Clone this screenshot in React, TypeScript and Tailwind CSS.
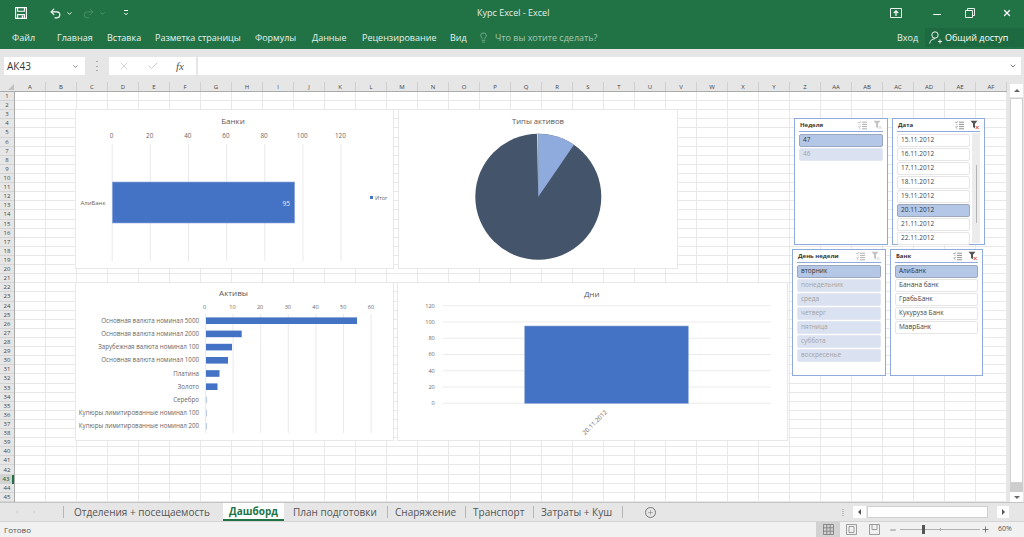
import { Undo2, Redo2, X, Check, ChevronDown, Lightbulb, Plus, Minus } from 'lucide-react'

const font = { fontFamily: '"Open Sans", sans-serif' }

/* -------------------- Data -------------------- */

const menu = [
  { label: 'Файл', w: 'w-[45px]' },
  { label: 'Главная', w: 'w-[50px]' },
  { label: 'Вставка', w: 'w-[48px]' },
  { label: 'Разметка страницы', w: 'w-[100px]' },
  { label: 'Формулы', w: 'w-[57px]' },
  { label: 'Данные', w: 'w-[50px]' },
  { label: 'Рецензирование', w: 'w-[88px]' },
  { label: 'Вид', w: 'w-[33px]' },
]

const columns = 'A B C D E F G H I J K L M N O P Q R S T U V W X Y Z AA AB AC AD AE AF'.split(' ')
const rows = Array.from({ length: 45 }, (_, i) => i + 1)
const cells = Array.from({ length: 45 * 32 }, (_, i) => i)

const assets = [
  { label: 'Основная валюта номинал 5000', end: 357 },
  { label: 'Основная валюта номинал 2000', end: 241.7 },
  { label: 'Зарубежная валюта номинал 100', end: 232 },
  { label: 'Основная валюта номинал 1000', end: 228 },
  { label: 'Платина', end: 219.5 },
  { label: 'Золото', end: 217.5 },
  { label: 'Серебро', end: 206.6 },
  { label: 'Купюры лимитированные номинал 100', end: 206.6 },
  { label: 'Купюры лимитированные номинал 200', end: 206.6 },
]

type SlicerItem = { label: string; state: 'sel' | 'dim' | 'on' }

const days: SlicerItem[] = [
  { label: 'вторник', state: 'sel' },
  { label: 'понедельник', state: 'dim' },
  { label: 'среда', state: 'dim' },
  { label: 'четверг', state: 'dim' },
  { label: 'пятница', state: 'dim' },
  { label: 'суббота', state: 'dim' },
  { label: 'воскресенье', state: 'dim' },
]

const banks: SlicerItem[] = [
  { label: 'АлиБанк', state: 'sel' },
  { label: 'Банана банк', state: 'on' },
  { label: 'ГрабьБанк', state: 'on' },
  { label: 'Кукуруза Банк', state: 'on' },
  { label: 'МаврБанк', state: 'on' },
]

const dates: SlicerItem[] = [
  { label: '15.11.2012', state: 'on' },
  { label: '16.11.2012', state: 'on' },
  { label: '17.11.2012', state: 'on' },
  { label: '18.11.2012', state: 'on' },
  { label: '19.11.2012', state: 'on' },
  { label: '20.11.2012', state: 'sel' },
  { label: '21.11.2012', state: 'on' },
  { label: '22.11.2012', state: 'on' },
]

const weeks: SlicerItem[] = [
  { label: '47', state: 'sel' },
  { label: '46', state: 'dim' },
]

/* -------------------- Small icons -------------------- */

function SaveIcon() {
  return (
    <svg width="12" height="12" viewBox="0 0 12 12" fill="none" stroke="#fff" strokeWidth="1.1">
      <path d="M.6.6h10.8v10.8H.6z" />
      <path d="M2.6.6v3.6h6.8V.6M2.6 11.4V7.6h6.8v3.8" />
      <path d="M6.8 8.6h1.4v2.6H6.8z" fill="#fff" stroke="none" />
    </svg>
  )
}

function MultiSelectIcon({ dim }: { dim?: boolean }) {
  return (
    <svg width="9" height="9" viewBox="0 0 9 9" fill="none" stroke={dim ? '#9a9a9a' : '#777'} strokeWidth="0.8">
      <path d="M4 1.2h5M4 3.4h5M4 5.6h5M4 7.8h5" />
      <path d="M.5 1.2l.8.8L2.8.4M.5 5.6l.8.8 1.5-1.6" />
      <path d="M1.5 3.4h.8M1.5 7.8h.8" />
    </svg>
  )
}

function ClearFilterIcon({ active }: { active?: boolean }) {
  return (
    <svg width="10" height="10" viewBox="0 0 10 10" fill="none">
      <path d="M.5.8h7L5 3.8v4.4L3 7V3.8z" fill={active ? '#555' : '#c4c4c4'} />
      <path d="M5.6 6l3 3M8.6 6l-3 3" stroke={active ? '#d9483b' : '#d8d8d8'} strokeWidth="1" />
    </svg>
  )
}

function GridViewIcon() {
  return (
    <svg width="11" height="11" viewBox="0 0 11 11" fill="none" stroke="#777" strokeWidth="0.8">
      <path d="M.5.5h10v10H.5zM.5 3.8h10M.5 7.2h10M3.8.5v10M7.2.5v10" />
    </svg>
  )
}

function PageViewIcon() {
  return (
    <svg width="11" height="11" viewBox="0 0 11 11" fill="none" stroke="#888" strokeWidth="0.8">
      <path d="M.5.5h10v10H.5zM3 2.5h5v6H3z" />
    </svg>
  )
}

function BreakViewIcon() {
  return (
    <svg width="11" height="11" viewBox="0 0 11 11" fill="none" stroke="#888" strokeWidth="0.8">
      <path d="M.5.5h10v10H.5zM3 .5v5h5v-5" />
    </svg>
  )
}

/* -------------------- Slicer -------------------- */

function Slicer({ title, items, active, scroll, className }: { title: string; items: SlicerItem[]; active?: boolean; scroll?: boolean; className: string }) {
  return (
    <div className={`absolute border border-[#8faadc] bg-white px-[4px] ${className}`}>
      <div className="flex h-[13px] items-center justify-between border-b border-[#8faadc] pl-[1px]">
        <span className="text-[6px] font-bold text-[#333]">{title}</span>
        <div className="flex items-center gap-[6px]">
          <MultiSelectIcon dim={!active} />
          <ClearFilterIcon active={active} />
        </div>
      </div>
      <div className="mt-[1px] flex gap-[2px]">
        <div className="mt-[1px] flex flex-1 flex-col gap-[1.5px]">
          {items.map((it) => (
            <div
              key={it.label}
              className={
                it.state === 'sel'
                  ? 'flex h-[12.5px] items-center rounded-[2px] border border-[#9aa7bd] bg-[#b4c7e7] pl-[3px] text-[6.5px] text-[#333]'
                  : it.state === 'dim'
                    ? 'flex h-[12.5px] items-center rounded-[2px] border border-[#e2e7f3] bg-[#dae1f0] pl-[3px] text-[6.5px] text-[#a3a3a3]'
                    : 'flex h-[12.5px] items-center rounded-[2px] border border-[#e6e6e6] bg-white pl-[3px] text-[6.5px] text-[#444]'
              }
            >
              {it.label}
            </div>
          ))}
        </div>
        {scroll && (
          <div className="flex h-[110px] w-[8px] justify-center bg-[#ececec] pt-[32px]">
            <div className="h-[58px] w-[1px] bg-[#b5b5b5]" />
          </div>
        )}
      </div>
    </div>
  )
}

/* -------------------- Charts -------------------- */

function BanksChart() {
  const ticks = [0, 20, 40, 60, 80, 100, 120]
  return (
    <svg viewBox="76 110 317 158" className="h-full w-full" style={font}>
      <text x="233" y="124" fontSize="8" textAnchor="middle" fill="#595959">Банки</text>
      {ticks.map((t, i) => (
        <g key={t}>
          <line x1={112.2 + i * 38.15} x2={112.2 + i * 38.15} y1="144" y2="261" stroke="#e4e4e4" strokeWidth="0.8" />
          <text x={111.5 + i * 38.15} y="138" fontSize="6.3" textAnchor="middle" fill="#666">{t}</text>
        </g>
      ))}
      <rect x="112.3" y="182" width="182.4" height="41" fill="#4472c4" stroke="#8faadc" strokeWidth="0.6" />
      <text x="105.5" y="205" fontSize="6" textAnchor="end" fill="#666">АлиБанк</text>
      <text x="290" y="206" fontSize="6.5" textAnchor="end" fill="#e8edf7">95</text>
      <rect x="370" y="196" width="3" height="3" fill="#4472c4" />
      <text x="375" y="199.5" fontSize="5.5" fill="#666">Итог</text>
    </svg>
  )
}

function PieChart() {
  return (
    <svg viewBox="399 110 278 158" className="h-full w-full" style={font}>
      <text x="538" y="124" fontSize="7.7" textAnchor="middle" fill="#595959">Типы активов</text>
      <circle cx="538.3" cy="196.7" r="63" fill="#44546a" />
      <path d="M538.3 196.7V133.7A63 63 0 0 1 574 144.8Z" fill="#8faadc" />
      <path d="M538.3 196.7V133.7L536.9 133.7Z" fill="#c9d3e4" />
    </svg>
  )
}

function AssetsChart() {
  const ticks = [0, 10, 20, 30, 40, 50, 60]
  return (
    <svg viewBox="76 283 317 157" className="h-full w-full" style={font}>
      <text x="233.5" y="296" fontSize="8" textAnchor="middle" fill="#595959">Активы</text>
      {ticks.map((t, i) => (
        <g key={t}>
          <line x1={205.5 + i * 27.6} x2={205.5 + i * 27.6} y1="314" y2="433" stroke="#e4e4e4" strokeWidth="0.8" />
          <text x={204.7 + i * 27.7} y="309" fontSize="5.5" textAnchor="middle" fill="#666">{t}</text>
        </g>
      ))}
      {assets.map((a, i) => (
        <g key={a.label}>
          <text x="199" y={322.8 + i * 13.2} fontSize="6.2" textAnchor="end" fill="#666">{a.label}</text>
          <rect x="206" y={317.4 + i * 13.2} width={a.end - 206} height="6.6" fill={a.end < 207 ? '#8faadc' : '#4472c4'} />
        </g>
      ))}
    </svg>
  )
}

function DaysChart() {
  const ticks = [120, 100, 80, 60, 40, 20, 0]
  return (
    <svg viewBox="398 283 389 157" className="h-full w-full" style={font}>
      <text x="591.7" y="296.5" fontSize="8" textAnchor="middle" fill="#595959">Дни</text>
      {ticks.map((t, i) => (
        <g key={t}>
          <line x1="442.7" x2="770.7" y1={305.7 + i * 16.27} y2={305.7 + i * 16.27} stroke="#e6e6e6" strokeWidth="0.8" />
          <text x="434.7" y={307.6 + i * 16.27} fontSize="5.5" textAnchor="end" fill="#666">{t}</text>
        </g>
      ))}
      <rect x="524.7" y="326" width="163.6" height="77.4" fill="#4472c4" stroke="#8faadc" strokeWidth="0.6" />
      <text x="595" y="424.5" fontSize="6.2" textAnchor="middle" fill="#666" transform="rotate(-45 595 422.7)">20.11.2012</text>
    </svg>
  )
}

/* -------------------- App -------------------- */

export default function App() {
  return (
    <div className="flex h-[537px] w-[1024px] flex-col overflow-hidden bg-[#e6e6e6]" style={font}>
      {/* ---------------- Title bar ---------------- */}
      <div className="h-[49px] shrink-0 bg-[#217346] text-white">
        <div className="flex h-[26px] items-center">
          <div className="ml-[15px]"><SaveIcon /></div>
          <Undo2 size={13} strokeWidth={2} className="ml-[22px]" />
          <ChevronDown size={7} strokeWidth={3} className="ml-[4px]" />
          <Redo2 size={13} strokeWidth={1.5} className="ml-[9px] text-[#4f9470]" />
          <ChevronDown size={7} strokeWidth={3} className="ml-[4px] text-[#4f9470]" />
          <div className="ml-[17px] flex flex-col items-center gap-[1px]">
            <div className="h-[1px] w-[4px] bg-white" />
            <ChevronDown size={6} strokeWidth={4} className="-mt-[1px]" />
          </div>
          <span className="ml-[348px] w-[72px] whitespace-nowrap text-[9px] text-[#e4efe9]">Курс Excel - Excel</span>
          <svg width="12" height="10" viewBox="0 0 12 10" fill="none" stroke="#fff" strokeWidth="0.9" className="ml-[341px]">
            <path d="M.5.5h11v9H.5z" />
            <path d="M6 8V3M3.8 5L6 2.8 8.2 5" strokeWidth="1.2" />
          </svg>
          <div className="ml-[31px] mt-[3px] h-[1.5px] w-[8px] bg-white" />
          <svg width="10" height="10" viewBox="0 0 10 10" fill="none" stroke="#fff" strokeWidth="0.9" className="ml-[24px]">
            <path d="M.5 2.5h7v7h-7zM2.5 2.5v-2h7v7h-2" />
          </svg>
          <X size={10} strokeWidth={3} className="ml-[27px]" />
        </div>
        <div className="flex h-[23px] items-center">
          <div className="flex shrink-0 pl-[12px] text-[9px] text-[#e8f1ec]">
            {menu.map((m) => (
              <span key={m.label} className={`${m.w} whitespace-nowrap`}>{m.label}</span>
            ))}
          </div>
          <Lightbulb size={11} strokeWidth={1.2} className="-ml-[5px] shrink-0 text-[#b6d3c3]" />
          <span className="ml-[6px] w-[101px] shrink-0 whitespace-nowrap text-[9px] text-[#a5c8b4]">Что вы хотите сделать?</span>
          <span className="ml-[301px] w-[20px] shrink-0 whitespace-nowrap text-[9px] text-[#e8f1ec]">Вход</span>
          <div className="ml-[8px] flex h-[19px] w-[99px] shrink-0 items-center bg-[#1e6a40] pl-[4px]">
            <svg width="13" height="13" viewBox="0 0 13 13" fill="none" stroke="#fff" strokeWidth="0.9">
              <circle cx="6" cy="4" r="3.2" />
              <path d="M.7 12.5c.4-3 2.4-4.8 5.3-4.8M9 10.5h4M11 8.5v4" />
            </svg>
            <span className="ml-[3px] whitespace-nowrap text-[9px] text-white">Общий доступ</span>
          </div>
        </div>
      </div>

      {/* ---------------- Formula bar ---------------- */}
      <div className="flex h-[33px] shrink-0 items-start gap-[2px] pl-[4px] pr-[3px] pt-[8px]">
        <div className="flex h-[18px] w-[81px] items-center justify-between bg-white pl-[3px] pr-[6px] text-[10px] text-[#333]">
          АК43
          <ChevronDown size={7} strokeWidth={3} className="text-[#777]" />
        </div>
        <div className="mx-[9px] mt-[4px] flex h-[10px] flex-col justify-between">
          <div className="h-[1px] w-[2px] bg-[#aaa]" />
          <div className="h-[1px] w-[2px] bg-[#aaa]" />
          <div className="h-[1px] w-[2px] bg-[#aaa]" />
        </div>
        <div className="flex h-[18px] w-[87px] items-center bg-white pl-[9px]">
          <X size={12} strokeWidth={1} className="text-[#a8a8a8]" />
          <Check size={12} strokeWidth={1.2} className="ml-[17px] text-[#a8a8a8]" />
          <span className="ml-[17px] text-[11px] italic text-[#555]" style={{ fontFamily: '"Liberation Serif", serif' }}>fx</span>
        </div>
        <div className="flex h-[18px] flex-1 items-center justify-end bg-white pr-[4px]">
          <ChevronDown size={8} strokeWidth={3} className="text-[#777]" />
        </div>
      </div>

      {/* ---------------- Sheet ---------------- */}
      <div className="relative flex h-[420px] shrink-0">
        <div className="flex w-[1007px] flex-col bg-white">
          <div className="flex h-[10px] border-b border-[#ababab] bg-[#e6e6e6]">
            <div className="relative w-[15px] shrink-0">
              <div className="absolute bottom-[1px] right-[1px] h-0 w-0 border-b-[6px] border-l-[6px] border-b-[#c2c2c2] border-l-transparent" />
            </div>
            <div className="grid flex-1 grid-cols-[repeat(32,31px)]">
              {columns.map((c) => (
                <div key={c} className="flex items-center justify-center border-r border-[#cfcfcf] text-[6px] leading-none text-[#444]">{c}</div>
              ))}
            </div>
          </div>
          <div className="flex h-[410px]">
            <div className="grid w-[15px] shrink-0 grid-rows-[repeat(45,9.11px)] border-r border-[#ababab] bg-[#e6e6e6]">
              {rows.map((r) => (
                <div key={r} className={r === 43 ? 'flex items-center justify-center overflow-hidden border-r-2 border-r-[#217346] bg-[#d2d2d2] text-[6px] font-semibold leading-none text-[#217346]' : 'flex items-center justify-center overflow-hidden border-b border-[#d4d4d4] text-[6px] leading-none text-[#444]'}>{r}</div>
              ))}
            </div>
            <div className="grid flex-1 grid-cols-[repeat(32,31px)] grid-rows-[repeat(45,9.11px)]">
              {cells.map((c) => (
                <div key={c} className="border-b border-r border-[#e8e8e8]" />
              ))}
            </div>
          </div>
        </div>

        {/* vertical scrollbar */}
        <div className="flex w-[17px] flex-col bg-[#e6e6e6] pl-[3px] pr-[1px] pt-[2px]">
          <div className="flex h-[13px] items-center justify-center bg-white">
            <div className="h-0 w-0 border-x-[3px] border-b-[3px] border-x-transparent border-b-[#666]" />
          </div>
          <div className="mt-[1px] h-[385px] border border-[#d0d0d0] bg-white" />
          <div className="flex-1 bg-[#cdcdcd]" />
          <div className="flex h-[10px] items-center justify-center bg-white">
            <div className="h-0 w-0 border-x-[3px] border-t-[3px] border-x-transparent border-t-[#666]" />
          </div>
        </div>

        {/* floating charts */}
        <div className="absolute left-[76px] top-[28px] h-[158px] w-[317px] bg-white outline outline-1 outline-[#e8e8e8]"><BanksChart /></div>
        <div className="absolute left-[399px] top-[28px] h-[158px] w-[278px] bg-white outline outline-1 outline-[#e8e8e8]"><PieChart /></div>
        <div className="absolute left-[76px] top-[201px] h-[157px] w-[317px] bg-white outline outline-1 outline-[#e8e8e8]"><AssetsChart /></div>
        <div className="absolute left-[398px] top-[201px] h-[157px] w-[389px] bg-white outline outline-1 outline-[#e8e8e8]"><DaysChart /></div>

        {/* floating slicers */}
        <Slicer title="Неделя" items={weeks} className="left-[794px] top-[36px] h-[127px] w-[94px]" />
        <Slicer title="Дата" items={dates} active scroll className="left-[892px] top-[36px] h-[127px] w-[93px]" />
        <Slicer title="День недели" items={days} className="left-[792px] top-[167px] h-[127px] w-[94px]" />
        <Slicer title="Банк" items={banks} active className="left-[890px] top-[167px] h-[127px] w-[93px]" />
      </div>

      {/* ---------------- Tabs ---------------- */}
      <div className="flex h-[19px] shrink-0 items-stretch border-t border-[#c4c4c4] text-[10px] text-[#555]">
        <div className="flex w-[63px] shrink-0 items-center pl-[16px]">
          <span className="text-[7px] text-[#bbb]">‹</span>
          <span className="ml-[15px] text-[7px] text-[#bbb]">›</span>
        </div>
        <div className="my-[3px] w-[1px] shrink-0 bg-[#b5b5b5]" />
        <span className="ml-[10px] flex w-[137px] shrink-0 items-center whitespace-nowrap">Отделения + посещаемость</span>
        <div className="ml-[12px] flex w-[61px] shrink-0 items-center justify-center border-b-2 border-[#217346] bg-white font-bold text-[#217346]">Дашборд</div>
        <span className="ml-[9px] flex w-[85px] shrink-0 items-center whitespace-nowrap">План подготовки</span>
        <div className="my-[3px] ml-[9px] w-[1px] shrink-0 bg-[#b5b5b5]" />
        <span className="ml-[7px] flex w-[62px] shrink-0 items-center whitespace-nowrap">Снаряжение</span>
        <div className="my-[3px] ml-[8px] w-[1px] shrink-0 bg-[#b5b5b5]" />
        <span className="ml-[7px] flex w-[52px] shrink-0 items-center whitespace-nowrap">Транспорт</span>
        <div className="my-[3px] ml-[8px] w-[1px] shrink-0 bg-[#b5b5b5]" />
        <span className="ml-[7px] flex w-[72px] shrink-0 items-center whitespace-nowrap">Затраты + Куш</span>
        <div className="my-[3px] ml-[9px] w-[1px] shrink-0 bg-[#b5b5b5]" />
        <div className="ml-[22px] flex shrink-0 items-center">
          <div className="flex h-[11px] w-[11px] items-center justify-center rounded-full border border-[#777]">
            <Plus size={7} strokeWidth={1.5} className="text-[#666]" />
          </div>
        </div>
        <div className="ml-[186px] flex shrink-0 flex-col justify-center gap-[1px]">
          <div className="h-[1px] w-[2px] bg-[#bbb]" />
          <div className="h-[1px] w-[2px] bg-[#bbb]" />
          <div className="h-[1px] w-[2px] bg-[#bbb]" />
          <div className="h-[1px] w-[2px] bg-[#bbb]" />
        </div>
        <div className="ml-[9px] flex shrink-0 items-center">
          <div className="flex h-[12px] w-[13px] items-center justify-center bg-white">
            <div className="h-0 w-0 border-y-[3px] border-r-[3px] border-y-transparent border-r-[#555]" />
          </div>
          <div className="ml-[1px] h-[12px] w-[121px] border border-[#d0d0d0] bg-white" />
          <div className="ml-[9px] flex h-[12px] w-[12px] items-center justify-center bg-white">
            <div className="h-0 w-0 border-y-[3px] border-l-[3px] border-y-transparent border-l-[#555]" />
          </div>
        </div>
      </div>

      {/* ---------------- Status bar ---------------- */}
      <div className="flex h-[16px] shrink-0 items-center border-t border-[#d4d4d4] bg-[#f1f1f1] text-[8px] text-[#555]">
        <span className="ml-[4px] w-[812px]">Готово</span>
        <div className="flex h-full w-[24px] items-center justify-center bg-[#d2d2d2]"><GridViewIcon /></div>
        <div className="ml-[6px]"><PageViewIcon /></div>
        <div className="ml-[12px]"><BreakViewIcon /></div>
        <Minus size={8} strokeWidth={2} className="ml-[9px] text-[#555]" />
        <div className="relative ml-[3px] h-[1px] w-[80px] bg-[#b0b0b0]">
          <div className="absolute left-[22px] top-[-4px] h-[9px] w-[3px] bg-[#555]" />
          <div className="absolute left-[40px] top-[-1px] h-[3px] w-[1px] bg-[#b0b0b0]" />
        </div>
        <Plus size={9} strokeWidth={2} className="ml-[1px] text-[#555]" />
        <span className="ml-[8px] text-[7px]">60%</span>
      </div>
    </div>
  )
}
